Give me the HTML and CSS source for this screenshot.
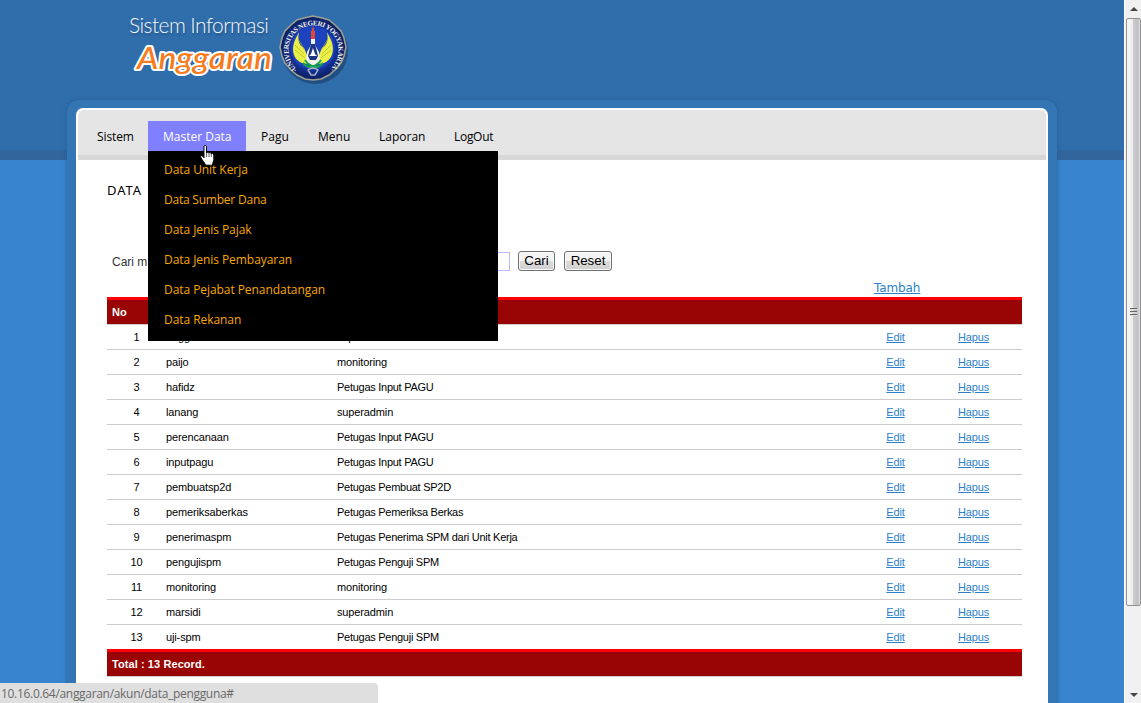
FILE: index.html
```html
<!DOCTYPE html>
<html lang="id">
<head>
<meta charset="utf-8">
<title>Sistem Informasi Anggaran</title>
<link rel="stylesheet" href="styles.css">
</head>
<body>
<div class="window">
<div class="page">
  <header class="brand">
    <svg class="wordmark" width="152" height="80" viewBox="0 0 152 80">
      <text class="word-top" x="4" y="33" textLength="140">Sistem Informasi</text>
      <text class="word-main" x="12" y="69" textLength="135" lengthAdjust="spacingAndGlyphs">Anggaran</text>
    </svg>
    <svg class="emblem" width="72" height="76" viewBox="0 0 72 76">
      <defs>
        <radialGradient id="disc"><stop offset="0" stop-color="#1739a8"/><stop offset=".65" stop-color="#1634a0"/><stop offset="1" stop-color="#0a1c58"/></radialGradient>
        <path id="ring" d="M20.5 59.5A25 25 0 1 1 52.5 59.5"/>
      </defs>
      <circle cx="38" cy="41" r="33" fill="#16375f" opacity=".55"/>
      <path d="M36 6l9 2 7 2 6 5 6 6 3 7 2 9-2 9-3 7-6 7-6 5-8 4-8 1-8-1-8-4-6-5-6-7-3-7-2-9 2-9 3-7 6-6 6-5 7-2z" fill="url(#disc)" stroke="#9ba093" stroke-width="1.6"/>
      <circle cx="36" cy="38" r="22" fill="#1c42bd"/>
      <path d="M31 54C18 54 13 42 18 30l4-8c-2 9 1 14 5 16l3 7 5 5M41 54C54 54 59 42 54 30l-4-8c2 9-1 14-5 16l-3 7-5 5" fill="#eaf044"/>
      <path d="M18 35l9 9M18 40l10 8M54 35l-9 9M54 40l-10 8M21 29l6 10M51 29l-6 10" stroke="#a8b536" stroke-width=".7"/>
      <path d="M36 18l2 5v12l4 7 1 9-7 5-7-5 1-9 4-7V23z" fill="#f2f2ed"/>
      <path d="M36 16l2 7v6h-4v-6z" fill="#df4532"/>
      <path d="M34 34h4l3 12-2 4h-6l-2-4z" fill="#1c3580"/>
      <path d="M36 38l2 6 2 2h-8l2-2z" fill="#fff"/>
      <path d="M28 50q8 12 16 0M26 53q10 10 20 0" fill="none" stroke="#18a24b" stroke-width="2"/>
      <path d="M31 60q5-4 10 0l-3 5h-4z" fill="none" stroke="#a5afc9" stroke-width="1.5"/>
      <text class="ring-text"><textPath href="#ring" textLength="121">·UNIVERSITAS NEGERI YOGYAKARTA·</textPath></text>
    </svg>
  </header>
  <main class="frame">
    <div class="sheet">
      <nav class="menu">
        <a class="w-sistem">Sistem</a>
        <div class="active w-master"><a>Master Data</a>
          <svg class="cursor" width="16" height="22" viewBox="0 0 16 22"><path d="M4 1.5c0-1.4 2.5-1.4 2.5 0V8c.5-1.2 2.2-.9 2.4.2.7-1 2.1-.7 2.3.6.8-.8 2.6-.4 2.6 1.2v4.5c0 2-1.3 3-1.3 5.7H5.4c-.2-2.5-3.7-5.1-4.7-8.1-.5-1.4 1-2.1 2-.9L4 12.8z" fill="#fff" stroke="#000"/><path d="M6.6 8v4M9 8.5V12M11.3 9v3" stroke="#333" stroke-width=".8"/></svg>
          <ul class="submenu">
            <li>Data Unit Kerja</li><li class="tight">Data Sumber Dana</li><li>Data Jenis Pajak</li><li>Data Jenis Pembayaran</li><li>Data Pejabat Penandatangan</li><li>Data Rekanan</li>
          </ul>
        </div>
        <a class="w-pagu">Pagu</a><a class="w-menu">Menu</a><a class="w-laporan">Laporan</a><a class="w-logout">LogOut</a>
      </nav>
      <section class="content">
        <h1>DATA</h1>
        <form class="search"><label>Cari m</label><input type="text" aria-label="Cari"><button type="button">Cari</button><button type="button" class="reset">Reset</button></form>
        <div class="add"><a>Tambah</a></div>
        <table>
          <thead><tr><th class="c-no">No</th><th class="c-name"></th><th class="c-role"></th><th class="c-edit"></th><th class="c-del"></th></tr></thead>
          <tbody>
          <tr><td>1</td><td>anggaran</td><td>superadmin</td><td><a>Edit</a></td><td><a>Hapus</a></td></tr>
          <tr><td>2</td><td>paijo</td><td>monitoring</td><td><a>Edit</a></td><td><a>Hapus</a></td></tr>
          <tr><td>3</td><td>hafidz</td><td class="staff">Petugas Input PAGU</td><td><a>Edit</a></td><td><a>Hapus</a></td></tr>
          <tr><td>4</td><td>lanang</td><td>superadmin</td><td><a>Edit</a></td><td><a>Hapus</a></td></tr>
          <tr><td>5</td><td>perencanaan</td><td class="staff">Petugas Input PAGU</td><td><a>Edit</a></td><td><a>Hapus</a></td></tr>
          <tr><td>6</td><td>inputpagu</td><td class="staff">Petugas Input PAGU</td><td><a>Edit</a></td><td><a>Hapus</a></td></tr>
          <tr><td>7</td><td>pembuatsp2d</td><td class="staff">Petugas Pembuat SP2D</td><td><a>Edit</a></td><td><a>Hapus</a></td></tr>
          <tr><td>8</td><td>pemeriksaberkas</td><td class="staff">Petugas Pemeriksa Berkas</td><td><a>Edit</a></td><td><a>Hapus</a></td></tr>
          <tr><td>9</td><td>penerimaspm</td><td class="staff">Petugas Penerima SPM dari Unit Kerja</td><td><a>Edit</a></td><td><a>Hapus</a></td></tr>
          <tr><td>10</td><td>pengujispm</td><td class="staff">Petugas Penguji SPM</td><td><a>Edit</a></td><td><a>Hapus</a></td></tr>
          <tr><td>11</td><td>monitoring</td><td>monitoring</td><td><a>Edit</a></td><td><a>Hapus</a></td></tr>
          <tr><td>12</td><td>marsidi</td><td>superadmin</td><td><a>Edit</a></td><td><a>Hapus</a></td></tr>
          <tr><td>13</td><td>uji-spm</td><td class="staff">Petugas Penguji SPM</td><td><a>Edit</a></td><td><a>Hapus</a></td></tr>
          </tbody>
          <tfoot><tr><th colspan="5">Total : 13 Record.</th></tr></tfoot>
        </table>
      </section>
    </div>
  </main>
</div>
<aside class="scrollbar">
  <svg width="15" height="18"><path d="M4 11h8L8 7z" fill="#444"/></svg>
  <div class="thumb"><i></i><i></i><i></i></div>
  <svg class="down" width="15" height="17"><path d="M4 7h8l-4 4z" fill="#444"/></svg>
</aside>
<div class="status">10.16.0.64/anggaran/akun/data_pengguna#</div>
</div>
</body>
</html>
```
FILE: styles.css
```css
* { box-sizing: border-box; }
body { margin: 0; overflow: hidden; font-family: "Liberation Sans", Arial, sans-serif; }
.window { position: relative; display: flex; width: 1141px; height: 703px; overflow: hidden; }
.page { width: 1124px; height: 703px; overflow: hidden; background: linear-gradient(#306dab 150px, #32659b 150px, #32659b 160px, #3984ce 160px); }
.brand { display: flex; height: 100px; padding: 0 0 0 125px; }
.emblem { margin: 10px 0 0 0; }
.wordmark { overflow: visible; }
.word-top { font: 300 21px Lato, sans-serif; fill: #f4f7fb; text-shadow: 1px 2px 2px #235283; }
.word-main { font: italic 500 31px Lato, sans-serif; fill: #f77b1b; stroke: #fff; stroke-width: 4px; stroke-linejoin: round; paint-order: stroke; }
.ring-text { font: bold 7px "Liberation Serif", serif; fill: #f1f1e6; }
.frame { width: 990px; height: 640px; margin-left: 67px; padding: 8px 9px 0; border-radius: 12px 12px 0 0; background: #3475b4; box-shadow: 0 0 4px #255f9c; }
.sheet { height: 632px; padding: 2px 2px 0; border-radius: 7px 7px 0 0; background: #fff; }
.menu { display: flex; height: 50px; padding: 11px 0 0 4px; background: #e5e5e5; border-bottom: 5px solid #d7d7d7; border-radius: 6px 6px 0 0; font: 12px/31px "Open Sans", "Noto Sans", sans-serif; white-space: nowrap; color: #000; letter-spacing: 0; }
.menu > a, .menu > div { height: 30px; padding-left: 15px; flex: none; }
.w-sistem { width: 66px; letter-spacing: -.1px; }
.w-master { width: 98px; }
.w-pagu { width: 57px; }
.w-menu { width: 61px; }
.w-laporan { width: 75px; }
.w-logout { width: 68px; letter-spacing: -.3px; }
.active { position: relative; background: #8080ff; color: #fff; }
.submenu { position: absolute; z-index: 2; top: 30px; left: 0; width: 350px; height: 190px; margin: 0; padding: 3px 16px; list-style: none; background: #000; color: #f7a707; letter-spacing: -.06px; }
.submenu li { height: 30px; }
.submenu .tight { letter-spacing: -.22px; }
.cursor { position: absolute; z-index: 3; left: 52px; top: 24px; }
.content { padding: 0 24px 0 29px; }
h1 { margin: 0; height: 91px; padding-top: 21px; font: 13px/18px "Noto Sans", sans-serif; letter-spacing: .9px; }
.search { display: flex; height: 20px; padding-left: 5px; font-size: 12px; line-height: 22px; color: #333; }
.search label { width: 98px; }
.search input { width: 300px; height: 19px; margin-top: 1px; border: 1px solid #b9b9ff; padding: 0; }
.search button { width: 37px; height: 20px; margin-left: 8px; padding: 0; border: 1px solid #707070; border-radius: 3px; background: linear-gradient(#f4f4f4 50%, #dcdcdc 50%, #d0d0d0); box-shadow: inset 0 0 0 1px #f8f8f8; font: 13.3px/18px "Liberation Sans", sans-serif; color: #000; }
.search .reset { width: 48px; margin-left: 9px; }
.add { height: 26px; padding: 8px 0 0 767px; font: 12px/18px "DejaVu Sans", sans-serif; letter-spacing: -.1px; }
.add a, td a { color: #2e7fc9; text-decoration: underline; }
table { width: 915px; border-collapse: separate; border-spacing: 0; table-layout: fixed; font-size: 11px; line-height: 14px; color: #000; letter-spacing: -.13px; }
th { height: 28px; padding: 0 5px; border-top: 3px solid #f00; border-bottom: 1px solid #ccc; background: #990404; color: #fff; text-align: left; letter-spacing: .08px; }
td { height: 25px; padding: 0; border-bottom: 1px solid #ccc; }
tbody tr:last-child td { height: 24px; border-bottom: 0; }
.staff { letter-spacing: -.27px; }
.c-no { width: 59px; }
.c-name { width: 171px; }
.c-role { width: 520px; }
.c-edit { width: 77px; }
td:first-child, td:nth-child(4) { text-align: center; }
td:nth-child(5) { padding-left: 24px; }
.scrollbar { display: flex; flex-direction: column; width: 17px; padding-left: 1px; background: #f0f0f0; border-left: 1px solid #fff; }
.scrollbar svg { flex: none; }
.thumb { width: 15px; height: 588px; display: flex; flex-direction: column; align-items: center; justify-content: center; gap: 1px; border: 1px solid #929292; border-radius: 2px; background: linear-gradient(90deg, #f7f7f7, #ececec 45%, #ccccd0 50%, #bfbfc5 85%, #e5e5e5); }
.thumb i { width: 7px; height: 2px; background: #666; border-bottom: 1px solid #ddd; }
.scrollbar .down { margin-top: auto; }
.status { position: absolute; z-index: 4; left: 0; bottom: 0; width: 378px; height: 20px; padding-left: 1px; border-radius: 0 4px 0 0; background: #dfdfdf; color: #696969; font: 12px/22px "Open Sans", sans-serif; letter-spacing: -.31px; }
```
